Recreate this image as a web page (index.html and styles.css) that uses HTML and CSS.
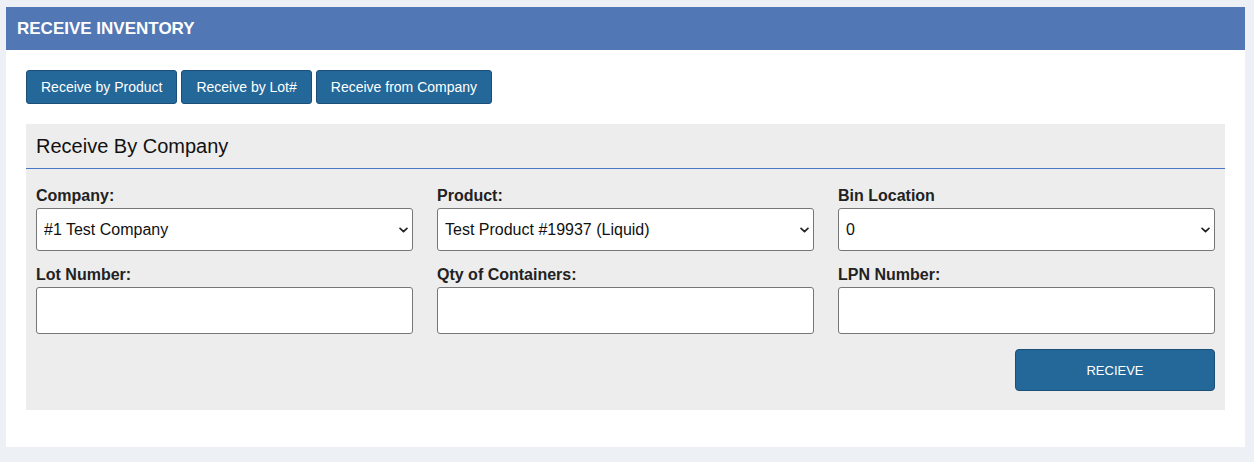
FILE: index.html
```html
<html>
 <head>
  <link rel="stylesheet" href="styles.css">
 </head>
<body>
 <div class="card">
  <div class="cardHead">RECEIVE INVENTORY</div>

  <div class="cardBody">
   <div class="tabs">
    <button class="tabBtn">Receive by Product</button>
    <button class="tabBtn">Receive by Lot#</button>
    <button class="tabBtn">Receive from Company</button>
   </div>

   <div class="panel">
    <div class="panelHead">Receive By Company</div>

    <div class="panelBody">
     <div class="fields">
      <div class="field">
       <label>Company:</label>
       <select class="ctl"><option>#1 Test Company</option></select>
      </div>
      <div class="field">
       <label>Product:</label>
       <select class="ctl"><option>Test Product #19937 (Liquid)</option></select>
      </div>
      <div class="field">
       <label>Bin Location</label>
       <select class="ctl"><option>0</option></select>
      </div>

      <div class="field">
       <label>Lot Number:</label>
       <input class="ctl txt" type="text">
      </div>
      <div class="field">
       <label>Qty of Containers:</label>
       <input class="ctl txt" type="text">
      </div>
      <div class="field">
       <label>LPN Number:</label>
       <input class="ctl txt" type="text">
      </div>
     </div>

     <div class="actions">
      <button class="submitBtn">RECIEVE</button>
     </div>
    </div>
   </div>
  </div>
 </div>
</body>
</html>
```

FILE: styles.css
```css
html, body {
        margin: 0;
        padding: 0;
        background-color: #edf0f4;
        font-family: "Liberation Sans", Arial, sans-serif;
        color: #212529;
       }

.card {
       margin: 7px 9px 0 6px;
       background-color: #ffffff;
      }

.cardHead {
           height: 43px;
           line-height: 43px;
           padding-left: 11px;
           background-color: #5177b4;
           color: #ffffff;
           font-size: 17px;
           font-weight: bold;
          }

.cardBody {
           padding: 20px 20px 37px 20px;
          }

.tabs {
       display: flex;
       gap: 4px;
      }

.tabBtn {
         height: 34px;
         padding: 0 14px;
         background-color: #246799;
         border: 1px solid #1b4f78;
         border-radius: 3px;
         color: #ffffff;
         font-family: "Liberation Sans", Arial, sans-serif;
         font-size: 14px;
        }

.panel {
        margin-top: 20px;
        background-color: #ededed;
       }

.panelHead {
            height: 44px;
            line-height: 44px;
            padding: 0 10px;
            border-bottom: 1px solid #4a78c4;
            font-size: 20px;
            color: #111111;
           }

.panelBody {
            padding: 17px 10px 19px 10px;
           }

.fields {
         display: grid;
         grid-template-columns: repeat(3, 1fr);
         column-gap: 24px;
         row-gap: 14px;
        }

.field label {
              display: block;
              font-size: 16px;
              font-weight: bold;
              line-height: 20px;
              margin-bottom: 2px;
              color: #222222;
             }

.ctl {
      display: block;
      box-sizing: border-box;
      width: 100%;
      height: 43px;
      margin: 0;
      padding: 0 7px;
      border: 1px solid #767676;
      border-radius: 3px;
      background-color: #ffffff;
      font-family: "Liberation Sans", Arial, sans-serif;
      font-size: 16px;
      color: #111111;
     }

select.ctl {
            -webkit-appearance: none;
            appearance: none;
            background-image: url("data:image/svg+xml,%3Csvg xmlns='http://www.w3.org/2000/svg' width='10' height='6' viewBox='0 0 10 6'%3E%3Cpath d='M1.2 1.2 L5 4.8 L8.8 1.2' fill='none' stroke='%23222' stroke-width='1.9' stroke-linecap='round' stroke-linejoin='round'/%3E%3C/svg%3E");
            background-repeat: no-repeat;
            background-position: right 4px center;
            background-size: 9px 6px;
           }

.txt {
      height: 47px;
     }

.actions {
          display: flex;
          justify-content: flex-end;
          margin-top: 15px;
         }

.submitBtn {
            width: 200px;
            height: 42px;
            background-color: #246799;
            border: 1px solid #1b4f78;
            border-radius: 4px;
            color: #ffffff;
            font-family: "Liberation Sans", Arial, sans-serif;
            font-size: 13px;
           }
```
